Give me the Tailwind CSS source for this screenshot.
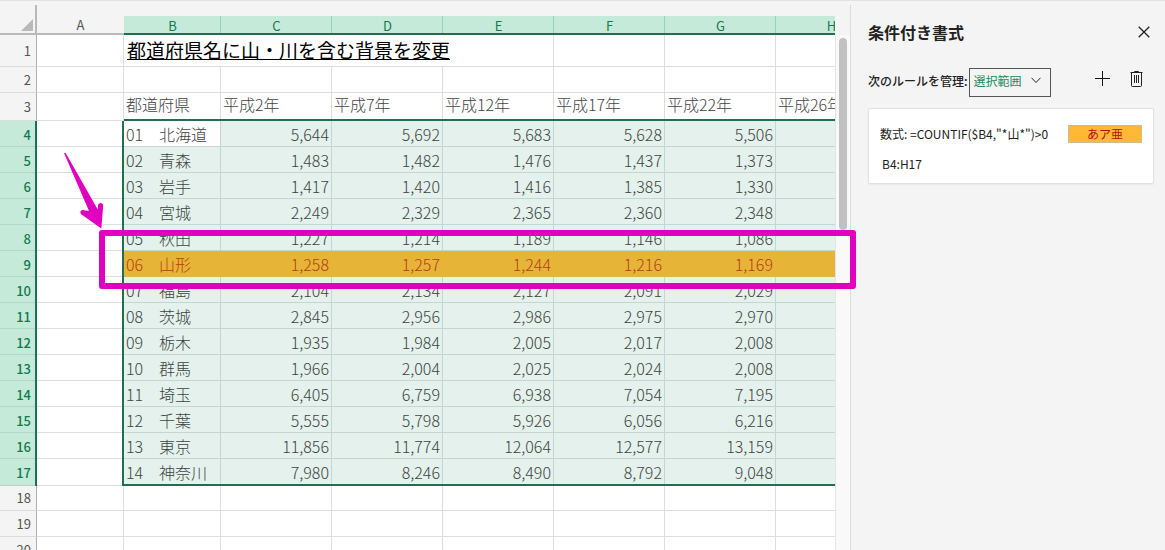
<!DOCTYPE html>
<html lang="ja">
<head>
<meta charset="utf-8">
<title>条件付き書式</title>
<script src="https://cdn.jsdelivr.net/npm/@tailwindcss/browser@4"></script>
</head>
<body class="bg-[#f4f4f4] font-['Noto_Sans_CJK_JP',sans-serif]">
<div class="relative flex h-screen flex-col overflow-hidden border-t border-[#e2e2e2]">
  <div class="flex min-h-0 flex-1 pt-1">
    <main class="min-w-0 flex-1 overflow-hidden">
      <table class="w-[850px] table-fixed border-separate border-spacing-0">
        <colgroup>
          <col class="w-[37px]"><col class="w-[87px]"><col class="w-[97px]"><col class="w-[111px]"><col class="w-[111px]"><col class="w-[111px]"><col class="w-[111px]"><col class="w-[111px]"><col class="w-[111px]">
        </colgroup>
        <thead>
          <tr id="columns" class="h-[30px] text-[13px] leading-[17px]"></tr>
        </thead>
        <tbody id="rows"></tbody>
      </table>
    </main>
    <div class="w-[15px] shrink-0 pt-[30px]">
      <div class="h-full border-l border-[#e4e4e4] bg-[#f9f9f9] pt-[3px] pl-[3px]">
        <div class="h-[192px] w-2 rounded-full bg-[#c1c1c1]"></div>
      </div>
    </div>
    <aside class="w-[315px] shrink-0 border-l border-[#dcdcdc] pr-[11px] pl-[17px] text-xs text-[#222]">
      <div class="flex h-14 items-center justify-between">
        <h2 class="pb-[2px] text-base leading-6 font-bold">条件付き書式</h2>
        <button aria-label="閉じる" class="mr-[3px] mb-[2px] p-px">
          <svg class="block" width="12" height="12" viewBox="0 0 12 12" fill="none" stroke="#222" stroke-width="1.3"><path d="M.7.7 11.3 11.3M11.3.7.7 11.3"/></svg>
        </button>
      </div>
      <div class="mt-[7px] flex h-[29px] items-center">
        <label for="scope" class="pb-1 font-medium whitespace-nowrap">次のルールを管理:</label>
        <div class="relative ml-px h-[29px] w-[82px]">
          <select id="scope" class="h-full w-full appearance-none border border-[#555] pb-1 pl-[4px] text-xs text-[#1f8a5d]"><option>選択範囲</option></select>
          <svg class="pointer-events-none absolute top-[9px] right-[10px]" width="10" height="7" viewBox="0 0 10 7" fill="none" stroke="#222"><path d="M.5.8 5 5.5 9.500 .8"/></svg>
        </div>
        <button aria-label="新しいルール" class="mb-2 ml-auto">
          <svg class="block" width="15" height="15" viewBox="0 0 15 15" fill="none" stroke="#111"><path d="M7.500 0V15M0 7.500H15"/></svg>
        </button>
        <button aria-label="すべて削除" class="mr-[11px] mb-2 ml-5">
          <svg class="block" width="13" height="17" viewBox="0 0 13 17" fill="none" stroke="#222"><path d="M.5 2.500H12.500M4.500 2.500V1.500H8.500V2.500M1.500 2.500V15.500Q1.500 16.500 2.500 16.500H10.500Q11.500 16.500 11.500 15.500V2.500M4.500 5V13M6.500 5V13M8.500 5V13"/></svg>
        </button>
      </div>
      <section class="mt-[11px] h-[76px] rounded-[2px] border border-[#e1e1e1] bg-white pt-4 pr-[11px] pl-[11px] shadow-xs">
        <div class="flex items-center justify-between">
          <p class="leading-[18px] whitespace-nowrap">数式: =COUNTIF($B4,"*山*")&gt;0</p>
          <p class="w-[74px] border border-[#cbbd99] bg-[#ffb935] text-center leading-4 text-[#b51212]">あア亜</p>
        </div>
        <p class="mt-3 pl-[2px] leading-[18px]">B4:H17</p>
      </section>
    </aside>
  </div>

  <div class="pointer-events-none absolute top-[229px] right-[309px] left-[99px] h-[59px] rounded-[3px] border-6 border-[#e000bf]"></div>
  <svg class="pointer-events-none absolute top-[151px] left-[63px]" width="42" height="78" viewBox="0 0 42 78" fill="#e000bf">
    <path d="M1 1 2.800 1.300 34.800 57.500 35 53.500C35.200 50 40.200 50 40.200 53.500L38.300 76.500 18.500 62.500C16 60.200 18 57.200 21 58.200L26 59Z"/>
  </svg>
</div>
<script>
const columns = ['B', 'C', 'D', 'E', 'F', 'G', 'H'];
const eras = ['平成2年', '平成7年', '平成12年', '平成17年', '平成22年', '平成26年'];
const data = [
  ['01　北海道', '5,644', '5,692', '5,683', '5,628', '5,506'],
  ['02　青森', '1,483', '1,482', '1,476', '1,437', '1,373'],
  ['03　岩手', '1,417', '1,420', '1,416', '1,385', '1,330'],
  ['04　宮城', '2,249', '2,329', '2,365', '2,360', '2,348'],
  ['05　秋田', '1,227', '1,214', '1,189', '1,146', '1,086'],
  ['06　山形', '1,258', '1,257', '1,244', '1,216', '1,169'],
  ['07　福島', '2,104', '2,134', '2,127', '2,091', '2,029'],
  ['08　茨城', '2,845', '2,956', '2,986', '2,975', '2,970'],
  ['09　栃木', '1,935', '1,984', '2,005', '2,017', '2,008'],
  ['10　群馬', '1,966', '2,004', '2,025', '2,024', '2,008'],
  ['11　埼玉', '6,405', '6,759', '6,938', '7,054', '7,195'],
  ['12　千葉', '5,555', '5,798', '5,926', '6,056', '6,216'],
  ['13　東京', '11,856', '11,774', '12,064', '12,577', '13,159'],
  ['14　神奈川', '7,980', '8,246', '8,490', '8,792', '9,048'],
];

// Cell lines are inset shadows, so the thick selection edge stays unbroken where lines cross.
document.getElementById('columns').innerHTML =
  '<th class="relative border-r-2 border-b-2 border-[#b9b9b9] p-0"><svg class="absolute right-[2px] bottom-[2px]" width="12" height="12" viewBox="0 0 12 12" fill="#b9b9b9"><path d="M12 0V12H0Z"/></svg></th>' +
  '<th class="border-b-2 border-[#b9b9b9] p-0 pt-[11px] font-normal text-[#555]">A</th>' +
  columns.map(c => `<th class="p-0 pt-[11px] font-normal text-[#137a4d]"><div class="h-[19px] bg-[#c6ead9] pt-px shadow-[inset_0_-2px_#1f6f50,inset_-1px_0_#95d3b8]">${c}</div></th>`).join('');

const rowHead = (n, selected) => selected
  ? `<th class="bg-[#c6ead9] p-0 pt-px pr-[6px] text-right text-[13px] leading-5 font-medium text-[#137a4d] shadow-[inset_-2px_0_#1f6f50,inset_0_-1px_#b3d6c7]">${n}</th>`
  : `<th class="border-r border-b border-r-[#b0b0b0] border-b-[#dcdcdc] bg-[#f4f4f4] p-0 pr-[5px] text-right text-[13px] leading-5 font-normal text-[#555]">${n}</th>`;
const blank = '<td class="border-r border-b border-[#dedede] bg-white p-0"></td>';

let html = '<tr class="h-[32px]">' + rowHead(1, false) + blank +
  '<td colspan="4" class="border-r border-b border-[#dedede] bg-white p-0 pb-[2px] pl-[3px] text-[19px] leading-6 whitespace-nowrap text-black underline">都道府県名に山・川を含む背景を変更</td>' + blank.repeat(3) + '</tr>';
html += '<tr class="h-[26px]">' + rowHead(2, false) + blank.repeat(8) + '</tr>';
html += '<tr class="h-[28px]">' + rowHead(3, false) + blank +
  ['都道府県', ...eras].map(t => `<td class="bg-white p-0 pb-[6px] pl-[2px] text-base leading-5 font-light whitespace-nowrap text-[#444] shadow-[inset_0_-2px_#1f6f50,inset_-1px_0_#dedede]">${t}</td>`).join('') + '</tr>';

data.forEach((row, r) => {
  const last = r === data.length - 1;
  const match = row[0].includes('山');
  const fill = match ? 'bg-[#e6b538] text-[#b5400e] shadow-[inset_0_-1px_#dcb552]'
    : 'bg-[#e4f1ec] text-[#3c4441] ' + (last
      ? 'shadow-[inset_0_-2px_#1f6f50,inset_-1px_0_#c8d4d0]'
      : 'shadow-[inset_-1px_0_#c8d4d0,inset_0_-1px_#c8d4d0]');
  html += `<tr class="${last ? 'h-[27px]' : 'h-[26px]'}">` + rowHead(r + 4, true) +
    '<td class="bg-white p-0 shadow-[inset_-2px_0_#1f6f50,inset_0_-1px_#dedede]"></td>' +
    [...row, ''].map((v, c) => {
      const tone = r === 0 && c === 0
        ? 'bg-white text-[#444] shadow-[inset_-1px_0_#c8d4d0,inset_0_-1px_#c8d4d0]' : fill;
      const side = c === 0 ? 'pl-[2px] text-left' : 'pr-[3px] text-right';
      return `<td class="p-0 pb-px text-base leading-5 font-light whitespace-nowrap ${tone} ${side}">${v}</td>`;
    }).join('') + '</tr>';
});

html += '<tr class="h-[25px]">' + rowHead(18, false) + blank.repeat(8) + '</tr>';
html += '<tr class="h-[26px]">' + rowHead(19, false) + blank.repeat(8) + '</tr>';
html += '<tr class="h-[26px]">' + rowHead(20, false) + blank.repeat(8) + '</tr>';
document.getElementById('rows').innerHTML = html;
</script>
</body>
</html>
